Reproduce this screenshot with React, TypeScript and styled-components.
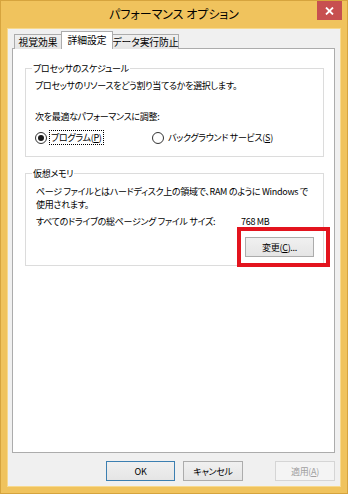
import React from "react";
import styled, { createGlobalStyle } from "styled-components";

const GlobalStyle = createGlobalStyle`
  html, body {
    margin: 0;
    padding: 0;
    background: #f0c35d;
  }
  body {
    font-family: "Noto Sans CJK JP", "Noto Sans", sans-serif;
    font-feature-settings: "palt";
    font-size: 9px;
    letter-spacing: -0.3px;
    color: #000;
  }
  * {
    box-sizing: border-box;
  }
`;

const Window = styled.div`
  width: 348px;
  height: 494px;
  background: #f0c35d;
  border: 1px solid #d6a43e;
  display: flex;
  flex-direction: column;
  overflow: hidden;
`;

const TitleBar = styled.div`
  height: 29px;
  display: grid;
  grid-template-columns: 1fr auto 1fr;
  align-items: start;
`;

const Title = styled.div`
  grid-column: 2;
  padding-top: 6px;
  font-size: 12px;
  letter-spacing: 0;
  line-height: 14px;
  color: #000;
`;

const CloseButton = styled.div`
  grid-column: 3;
  justify-self: end;
  margin-right: 5px;
  width: 25px;
  height: 19px;
  background: #c75050;
  display: flex;
  align-items: center;
  justify-content: center;
`;

const Client = styled.div`
  flex: 1;
  margin: 0 7px 7px 7px;
  background: #f0f0f0;
  box-shadow: 0 0 0 1px #f7d98e;
  padding: 2px 5px 5px 4px;
  display: flex;
  flex-direction: column;
`;

const TabStrip = styled.div`
  height: 18px;
  display: flex;
  align-items: flex-end;
  margin-bottom: -1px;
  padding-left: 2px;
`;

const Tab = styled.div<{ $active?: boolean; $w: number }>`
  position: relative;
  width: ${(p) => p.$w}px;
  height: ${(p) => (p.$active ? 18 : 15)}px;
  margin-left: ${(p) => (p.$active ? -1 : 0)}px;
  margin-right: ${(p) => (p.$active ? -1 : 0)}px;
  border: 1px solid #acacac;
  border-bottom: none;
  background: ${(p) =>
    p.$active ? "#fff" : "linear-gradient(#f0f0f0, #e5e5e5)"};
  z-index: ${(p) => (p.$active ? 1 : 0)};
  display: flex;
  justify-content: center;
  align-items: center;
  padding-bottom: ${(p) => (p.$active ? 1 : 0)}px;
  font-size: 9.8px;
  letter-spacing: -0.1px;
  line-height: 13px;
  white-space: nowrap;
`;

const Panel = styled.div`
  height: 405px;
  background: #fff;
  border: 1px solid #acacac;
  padding: 0 10px 0 12px;
`;

const Group = styled.fieldset<{ $top: number; $bottom: number }>`
  margin: ${(p) => p.$top}px 0 0 0;
  border: 1px solid #dcdcdc;
  padding: 0 9px ${(p) => p.$bottom}px 9px;
  display: flex;
  flex-direction: column;
  min-width: 0;
`;

const Legend = styled.legend`
  margin-left: -3px;
  padding: 0 1px;
  line-height: 13px;
`;

const Line = styled.div<{ $gap?: number; $indent?: number }>`
  margin-top: ${(p) => p.$gap ?? 0}px;
  padding-left: ${(p) => p.$indent ?? 0}px;
  line-height: 13px;
  white-space: nowrap;
`;

const RadioRow = styled.div`
  margin-top: 7px;
  height: 15px;
  display: flex;
  align-items: center;
`;

const RadioOption = styled.label<{ $w?: number }>`
  display: flex;
  align-items: center;
  width: ${(p) => (p.$w ? `${p.$w}px` : "auto")};
  white-space: nowrap;
`;

const RadioCircle = styled.span<{ $checked?: boolean }>`
  width: 12px;
  height: 12px;
  border-radius: 50%;
  border: 1px solid #333;
  background: #fff;
  display: flex;
  align-items: center;
  justify-content: center;
  margin-right: 1px;
  &::after {
    content: "";
    display: ${(p) => (p.$checked ? "block" : "none")};
    width: 6px;
    height: 6px;
    border-radius: 50%;
    background: #1a1a1a;
  }
`;

const RadioText = styled.span<{ $focus?: boolean }>`
  line-height: 13px;
  padding: 0 1px;
  margin-left: 1px;
  border: 1px dotted ${(p) => (p.$focus ? "#000" : "transparent")};
`;

const SizeRow = styled.div`
  margin-top: 4px;
  display: grid;
  grid-template-columns: 205px auto;
  line-height: 13px;
  padding-left: 1px;
  white-space: nowrap;
`;

const ButtonWrap = styled.div`
  position: relative;
  align-self: flex-end;
  margin-top: 9px;
`;

const Highlight = styled.div`
  position: absolute;
  top: -10px;
  bottom: -10px;
  left: -8px;
  right: -16px;
  border: 4px solid #e3141e;
  pointer-events: none;
`;

const Button = styled.button<{ $w: number; $default?: boolean }>`
  width: ${(p) => p.$w}px;
  height: 20px;
  padding: 0;
  font: inherit;
  letter-spacing: inherit;
  line-height: 13px;
  color: ${(p) => (p.disabled ? "#a0a0a0" : "#000")};
  border: 1px solid
    ${(p) => (p.$default ? "#3c7fb1" : p.disabled ? "#d5d5d5" : "#acacac")};
  background: ${(p) =>
    p.disabled ? "#f4f4f4" : "linear-gradient(#f0f0f0, #e5e5e5)"};
  border-radius: 0;
`;

const ButtonRow = styled.div`
  margin-top: 8px;
  display: flex;
  justify-content: flex-end;
  gap: 8px;
`;

const Spacer = styled.div`
  width: 16px;
`;

export default function App() {
  return (
    <>
      <GlobalStyle />
      <Window>
        <TitleBar>
          <Title>パフォーマンス オプション</Title>
          <CloseButton>
            <svg width="9" height="8" viewBox="0 0 9 8">
              <path
                d="M1 0.5 L8 7.5 M8 0.5 L1 7.5"
                stroke="#fff"
                strokeWidth="1.8"
              />
            </svg>
          </CloseButton>
        </TitleBar>
        <Client>
          <TabStrip>
            <Tab $w={48}>視覚効果</Tab>
            <Tab $w={52} $active>
              詳細設定
            </Tab>
            <Tab $w={67}>データ実行防止</Tab>
          </TabStrip>
          <Panel>
            <Group $top={13} $bottom={11}>
              <Legend>プロセッサのスケジュール</Legend>
              <Line $gap={4}>プロセッサのリソースをどう割り当てるかを選択します。</Line>
              <Line $gap={18}>次を最適なパフォーマンスに調整:</Line>
              <RadioRow>
                <RadioOption $w={117}>
                  <RadioCircle $checked />
                  <RadioText $focus>
                    プログラム(<u>P</u>)
                  </RadioText>
                </RadioOption>
                <RadioOption>
                  <RadioCircle />
                  <RadioText>
                    バックグラウンド サービス(<u>S</u>)
                  </RadioText>
                </RadioOption>
              </RadioRow>
            </Group>
            <Group $top={10} $bottom={8}>
              <Legend>仮想メモリ</Legend>
              <Line $gap={5} $indent={1}>
                ページ ファイルとはハードディスク上の領域で、RAM のように Windows で
              </Line>
              <Line $indent={1}>使用されます。</Line>
              <SizeRow>
                <span>すべてのドライブの総ページング ファイル サイズ:</span>
                <span>768 MB</span>
              </SizeRow>
              <ButtonWrap>
                <Button $w={69}>
                  変更(<u>C</u>)...
                </Button>
                <Highlight />
              </ButtonWrap>
            </Group>
          </Panel>
          <ButtonRow>
            <Button $w={69} $default>
              OK
            </Button>
            <Button $w={60}>キャンセル</Button>
            <Spacer />
            <Button $w={60} disabled>
              適用(<u>A</u>)
            </Button>
          </ButtonRow>
        </Client>
      </Window>
    </>
  );
}
